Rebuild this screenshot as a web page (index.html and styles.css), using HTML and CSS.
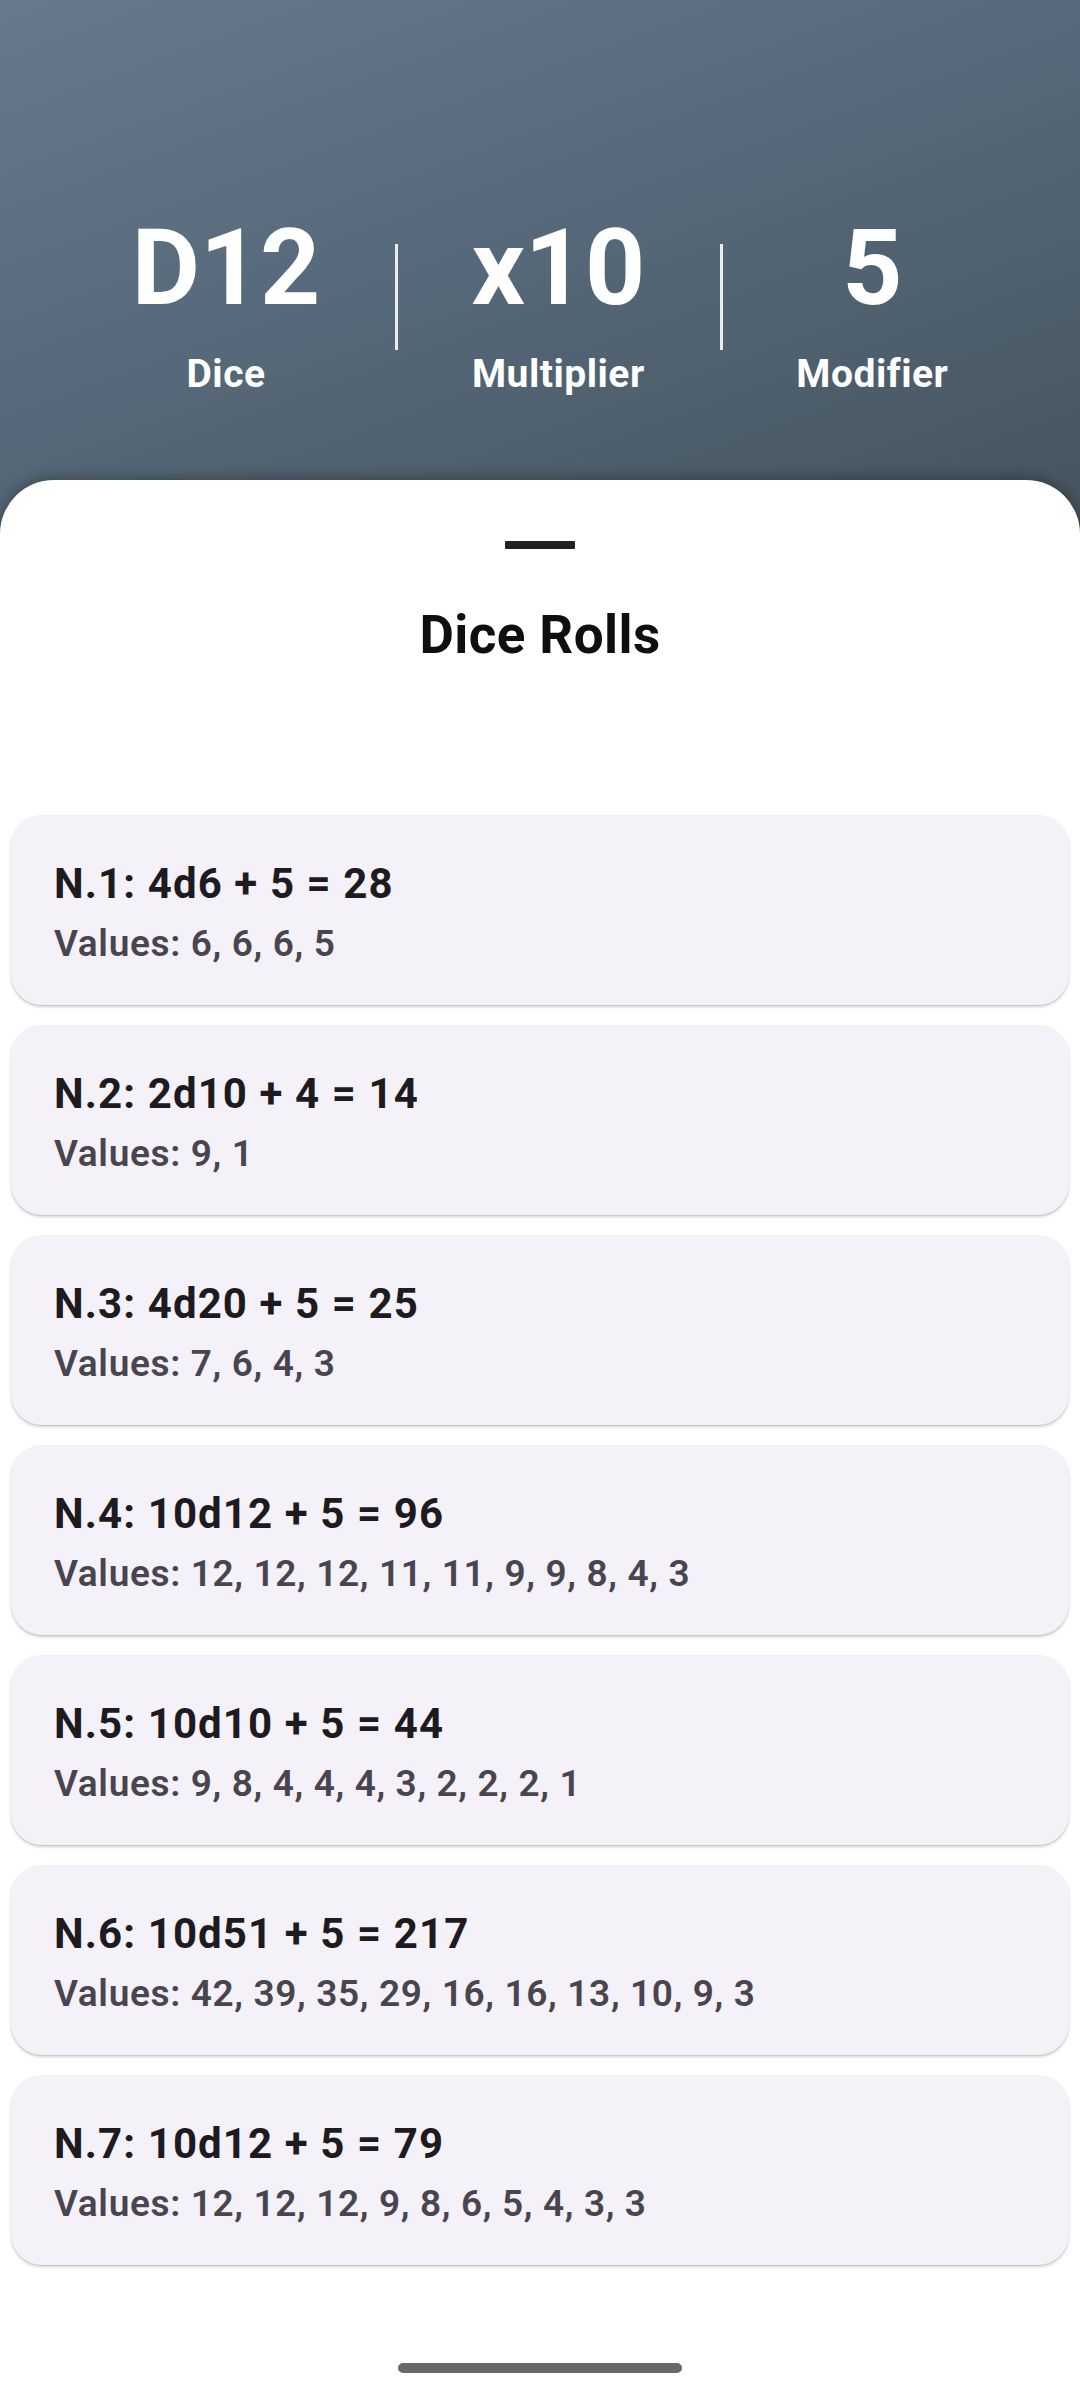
FILE: index.html
```html
<!DOCTYPE html>
<html lang="en">
<head>
<meta charset="utf-8">
<title>Dice Rolls</title>
<link rel="stylesheet" href="styles.css">
</head>
<body>
<div class="screen">
  <header class="header">
    <div class="stats">
      <div class="stat">
        <div class="stat-value">D12</div>
        <div class="stat-label">Dice</div>
      </div>
      <div class="divider"></div>
      <div class="stat">
        <div class="stat-value">x10</div>
        <div class="stat-label">Multiplier</div>
      </div>
      <div class="divider"></div>
      <div class="stat">
        <div class="stat-value">5</div>
        <div class="stat-label">Modifier</div>
      </div>
    </div>
  </header>
  <main class="sheet">
    <div class="handle"></div>
    <h1 class="sheet-title">Dice Rolls</h1>
    <ul class="rolls">
      <li class="roll">
        <div class="roll-title">N.1: 4d6 + 5 = 28</div>
        <div class="roll-values">Values: 6, 6, 6, 5</div>
      </li>
      <li class="roll">
        <div class="roll-title">N.2: 2d10 + 4 = 14</div>
        <div class="roll-values">Values: 9, 1</div>
      </li>
      <li class="roll">
        <div class="roll-title">N.3: 4d20 + 5 = 25</div>
        <div class="roll-values">Values: 7, 6, 4, 3</div>
      </li>
      <li class="roll">
        <div class="roll-title">N.4: 10d12 + 5 = 96</div>
        <div class="roll-values">Values: 12, 12, 12, 11, 11, 9, 9, 8, 4, 3</div>
      </li>
      <li class="roll">
        <div class="roll-title">N.5: 10d10 + 5 = 44</div>
        <div class="roll-values">Values: 9, 8, 4, 4, 4, 3, 2, 2, 2, 1</div>
      </li>
      <li class="roll">
        <div class="roll-title">N.6: 10d51 + 5 = 217</div>
        <div class="roll-values">Values: 42, 39, 35, 29, 16, 16, 13, 10, 9, 3</div>
      </li>
      <li class="roll">
        <div class="roll-title">N.7: 10d12 + 5 = 79</div>
        <div class="roll-values">Values: 12, 12, 12, 9, 8, 6, 5, 4, 3, 3</div>
      </li>
    </ul>
    <div class="nav-bar">
      <div class="home-indicator"></div>
    </div>
  </main>
</div>
</body>
</html>
```

FILE: styles.css
```css
* {
  box-sizing: border-box;
}

html, body {
  margin: 0;
  padding: 0;
  background: #ffffff;
}

body {
  font-family: Roboto, "Noto Sans", "Liberation Sans", sans-serif;
  width: 1080px;
  height: 2400px;
  overflow: hidden;
}

.screen {
  width: 1080px;
  height: 2400px;
  background-color: #ffffff;
  background-image: linear-gradient(160deg, #67798a 0%, #56697a 45%, #44525c 100%);
  background-size: 1080px 560px;
  background-repeat: no-repeat;
  display: flex;
  flex-direction: column;
}

.header {
  height: 480px;
  padding-top: 209px;
}

.stats {
  display: flex;
  justify-content: center;
  align-items: flex-start;
  color: #ffffff;
}

.stat {
  display: flex;
  flex-direction: column;
  align-items: center;
}

.stat-value {
  font-size: 105px;
  line-height: 120px;
  font-weight: 700;
}

.stat-label {
  font-size: 39px;
  line-height: 50px;
  font-weight: 700;
  letter-spacing: 0.5px;
  margin-top: 20px;
}

.divider {
  width: 3px;
  height: 106px;
  margin: 35px 73px 0 75px;
  background: rgba(255, 255, 255, 0.88);
}

.sheet {
  flex: 1;
  background: #ffffff;
  border-radius: 54px 54px 0 0;
  box-shadow: 0 -3px 14px rgba(0, 0, 0, 0.28);
  display: flex;
  flex-direction: column;
  align-items: center;
  padding-top: 61px;
}

.handle {
  width: 70px;
  height: 8px;
  background: #222222;
  border-radius: 1px;
}

.sheet-title {
  margin: 56px 0 0;
  font-size: 53px;
  line-height: 60px;
  font-weight: 700;
  letter-spacing: 0.4px;
  color: #0f0f0f;
}

.rolls {
  list-style: none;
  margin: 150px 0 0;
  padding: 0 11px;
  width: 100%;
  display: flex;
  flex-direction: column;
  gap: 20px;
}

.roll {
  height: 190px;
  background: #f4f1f8;
  border-radius: 31px;
  padding: 41px 43px 0;
  box-shadow: 0 2px 3px rgba(0, 0, 0, 0.18), 0 1px 1px rgba(0, 0, 0, 0.08);
}

.roll-title {
  font-size: 42px;
  line-height: 56px;
  font-weight: 700;
  letter-spacing: 1.1px;
  color: #1d1b20;
}

.roll-values {
  margin-top: 8px;
  font-size: 37px;
  line-height: 48px;
  font-weight: 600;
  letter-spacing: 0.65px;
  color: #49454f;
}

.nav-bar {
  margin-top: auto;
  width: 100%;
  display: flex;
  justify-content: center;
  padding-bottom: 27px;
}

.home-indicator {
  width: 284px;
  height: 10px;
  border-radius: 5px;
  background: #686868;
}
```
